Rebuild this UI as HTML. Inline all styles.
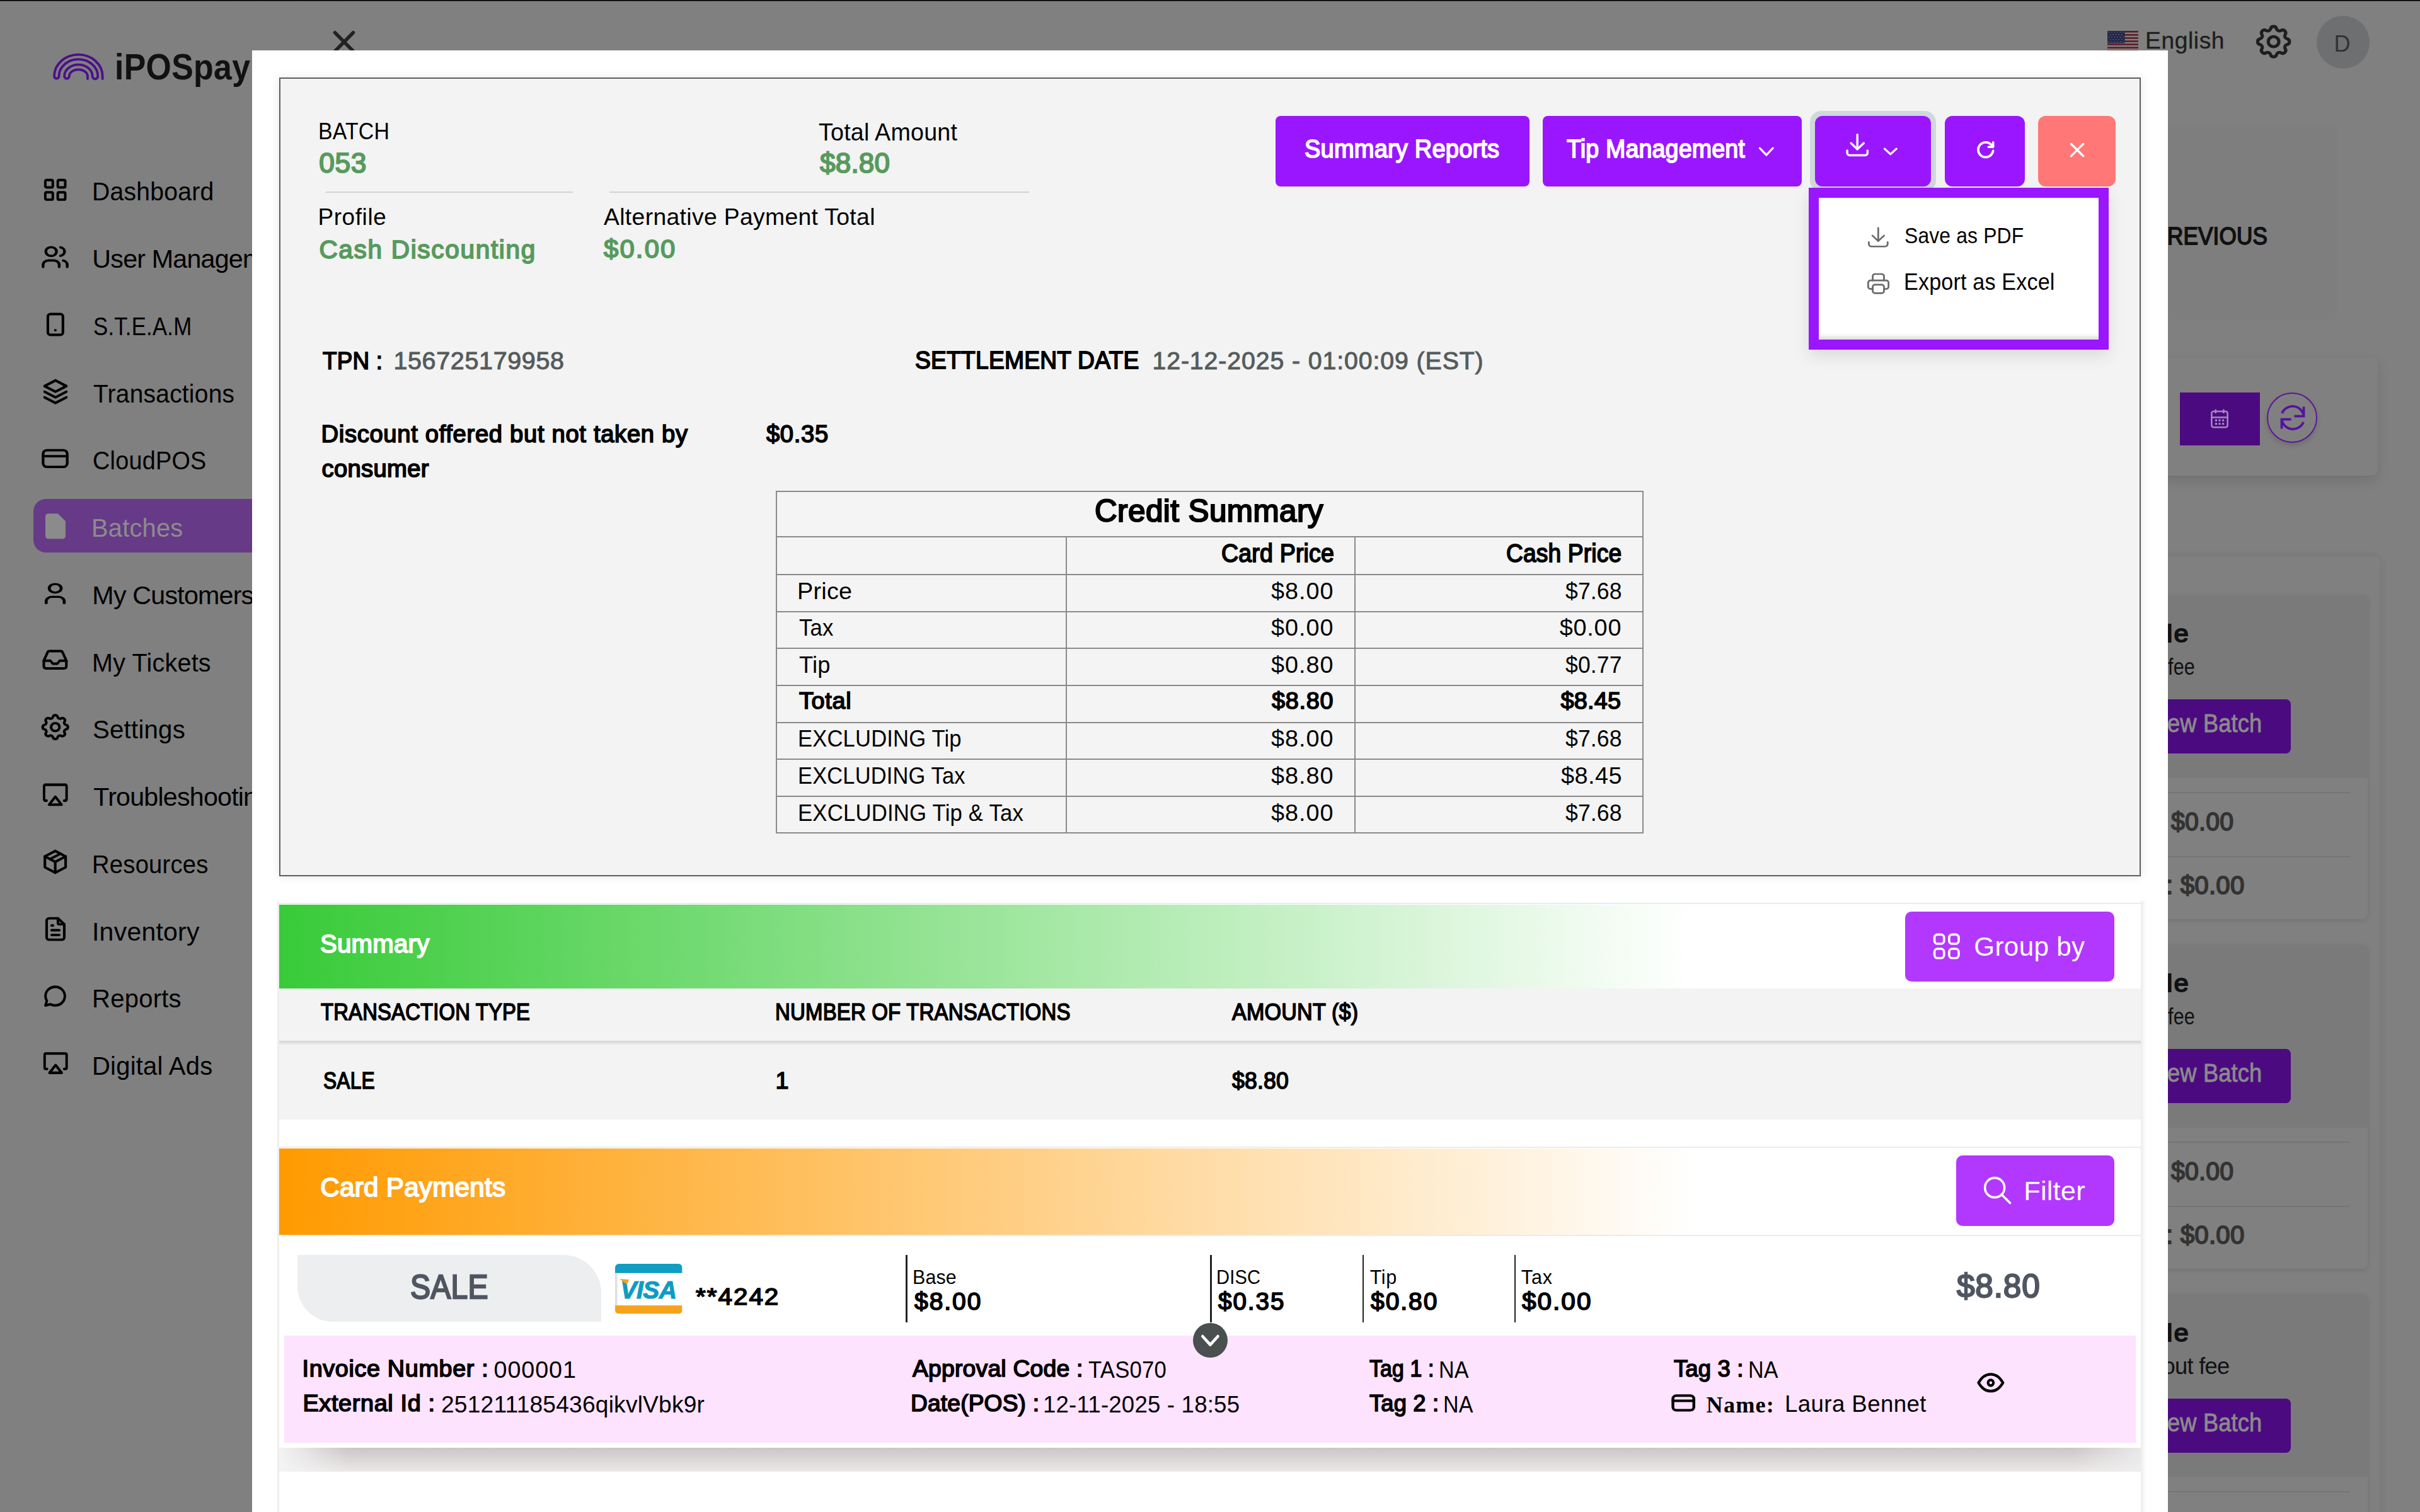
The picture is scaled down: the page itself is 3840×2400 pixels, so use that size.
<!DOCTYPE html>
<html><head><meta charset="utf-8">
<style>
html,body{margin:0;padding:0}
body{width:3840px;height:2400px;overflow:hidden;position:relative;background:#808080;font-family:"Liberation Sans",sans-serif}
@media (max-width:2500px){html{zoom:0.5}}
.t{position:absolute;line-height:1;white-space:nowrap;font-family:"Liberation Sans",sans-serif}
.ic{position:absolute;overflow:visible}
.r{position:absolute;box-sizing:border-box}
</style></head><body>
<!-- top dark line -->
<div class="r" style="left:0;top:0;width:3840px;height:2px;background:linear-gradient(#000 50%,#555)"></div>

<!-- ===== sidebar ===== -->
<svg class="ic" style="left:0;top:0" width="200" height="160"><path d="M162.7 125 L162.7 121 A38.3 34.3 0 0 0 86.1 121 A3.7 3.7 0 0 0 93.5 121 A30.9 26.9 0 0 1 155.3 121 A4.3 4.3 0 0 1 146.7 121 A22.3 18.3 0 0 0 102.1 121 A3.85 3.85 0 0 0 109.8 121 A14.6 10.6 0 0 1 139 121 L139 125" fill="none" stroke="#4b108a" stroke-width="3.8" stroke-linecap="round" stroke-linejoin="round"/></svg>
<div id="logo" class="t" style="position:absolute;left:181.67px;top:77.05px;font-size:58.28px;letter-spacing:0.291px;font-weight:700;color:#111;transform:scaleX(0.8908);transform-origin:left">iPOSpay</div>
<div class="r" style="left:53px;top:792px;width:400px;height:85px;border-radius:20px;background:#663a87"></div>
<svg class="ic" style="left:64px;top:809.7px" width="50.5" height="49" viewBox="0 0 24 24" preserveAspectRatio="none"><path d="M6 2.6h7.2l5.8 5.8v11.6a2.2 2.2 0 0 1 -2.2 2.2h-10.8a2.2 2.2 0 0 1 -2.2 -2.2v-15.2a2.2 2.2 0 0 1 2.2 -2.2z" fill="#8b8b8b"/></svg>
<svg class="ic" style="left:64.10px;top:278.12px" width="47.40" height="46.65" viewBox="0 0 24 24" preserveAspectRatio="none"><g fill="none" stroke="#000" stroke-width="2.041" stroke-linecap="round" stroke-linejoin="round" ><rect x="4" y="4" width="6" height="6" rx="1"/><rect x="14" y="4" width="6" height="6" rx="1"/><rect x="4" y="14" width="6" height="6" rx="1"/><rect x="14" y="14" width="6" height="6" rx="1"/></g></svg>
<svg class="ic" style="left:62.32px;top:386.73px" width="51.07" height="42.13" viewBox="0 0 24 24" preserveAspectRatio="none"><g fill="none" stroke="#000" stroke-width="2.060" stroke-linecap="round" stroke-linejoin="round" ><path d="M5 7a4 4 0 1 0 8 0a4 4 0 1 0 -8 0"/><path d="M3 21v-2a4 4 0 0 1 4 -4h4a4 4 0 0 1 4 4v2"/><path d="M16 3.13a4 4 0 0 1 0 7.75"/><path d="M21 21v-2a4 4 0 0 0 -3 -3.85"/></g></svg>
<svg class="ic" style="left:64.05px;top:492.50px" width="47.80" height="44.00" viewBox="0 0 24 24" preserveAspectRatio="none"><g fill="none" stroke="#000" stroke-width="2.092" stroke-linecap="round" stroke-linejoin="round" ><path d="M6 5a2 2 0 0 1 2 -2h8a2 2 0 0 1 2 2v14a2 2 0 0 1 -2 2h-8a2 2 0 0 1 -2 -2v-14z"/><path d="M12 17v.01"/></g></svg>
<svg class="ic" style="left:61.62px;top:595.08px" width="52.05" height="53.55" viewBox="0 0 24 24" preserveAspectRatio="none"><g fill="none" stroke="#000" stroke-width="1.818" stroke-linecap="round" stroke-linejoin="round" ><path d="M12 4l-8 4l8 4l8 -4l-8 -4"/><path d="M4 12l8 4l8 -4"/><path d="M4 16l8 4l8 -4"/></g></svg>
<svg class="ic" style="left:62.32px;top:705.46px" width="51.07" height="45.77" viewBox="0 0 24 24" preserveAspectRatio="none"><g fill="none" stroke="#000" stroke-width="1.983" stroke-linecap="round" stroke-linejoin="round" ><path d="M3 8a3 3 0 0 1 3 -3h12a3 3 0 0 1 3 3v8a3 3 0 0 1 -3 3h-12a3 3 0 0 1 -3 -3z"/><path d="M3 10h18"/></g></svg>
<svg class="ic" style="left:59.10px;top:921.53px" width="57.20" height="40.53" viewBox="0 0 24 24" preserveAspectRatio="none"><g fill="none" stroke="#000" stroke-width="1.965" stroke-linecap="round" stroke-linejoin="round" ><path d="M8 7a4 4 0 1 0 8 0a4 4 0 0 0 -8 0"/><path d="M6 21v-2a4 4 0 0 1 4 -4h4a4 4 0 0 1 4 4v2"/></g></svg>
<svg class="ic" style="left:63.49px;top:1025.47px" width="48.82" height="45.52" viewBox="0 0 24 24" preserveAspectRatio="none"><g fill="none" stroke="#000" stroke-width="2.035" stroke-linecap="round" stroke-linejoin="round" ><path d="M3.2 12.5 L6.2 5.4 Q6.6 4.5 7.5 4.5 H16.5 Q17.4 4.5 17.8 5.4 L20.8 12.5 V17 Q20.8 19 18.8 19 H5.2 Q3.2 19 3.2 17 Z"/><path d="M3.2 12.5 H8.3 L10.2 15 H13.8 L15.7 12.5 H20.8"/></g></svg>
<svg class="ic" style="left:61.13px;top:1129.42px" width="53.44" height="50.27" viewBox="0 0 24 24" preserveAspectRatio="none"><g fill="none" stroke="#000" stroke-width="1.851" stroke-linecap="round" stroke-linejoin="round" ><path d="M10.325 4.317c.426 -1.756 2.924 -1.756 3.35 0a1.724 1.724 0 0 0 2.573 1.066c1.543 -.94 3.31 .826 2.37 2.37a1.724 1.724 0 0 0 1.065 2.572c1.756 .426 1.756 2.924 0 3.35a1.724 1.724 0 0 0 -1.066 2.573c.94 1.543 -.826 3.31 -2.37 2.37a1.724 1.724 0 0 0 -2.572 1.065c-.426 1.756 -2.924 1.756 -3.35 0a1.724 1.724 0 0 0 -2.573 -1.066c-1.543 .94 -3.31 -.826 -2.37 -2.37a1.724 1.724 0 0 0 -1.065 -2.572c-1.756 -.426 -1.756 -2.924 0 -3.35a1.724 1.724 0 0 0 1.066 -2.573c-.94 -1.543 .826 -3.31 2.37 -2.37c1 .608 2.296 .07 2.572 -1.065z"/><path d="M9 12a3 3 0 1 0 6 0a3 3 0 0 0 -6 0"/></g></svg>
<svg class="ic" style="left:64.35px;top:1235.13px" width="47.60" height="50.72" viewBox="0 0 24 24" preserveAspectRatio="none"><g fill="none" stroke="#000" stroke-width="1.953" stroke-linecap="round" stroke-linejoin="round" ><path d="M5 17h-1a1 1 0 0 1 -1 -1v-10a1 1 0 0 1 1 -1h16a1 1 0 0 1 1 1v10a1 1 0 0 1 -1 1h-1"/><path d="M12 14l5 6h-10z"/></g></svg>
<svg class="ic" style="left:63.18px;top:1345.05px" width="49.35" height="46.00" viewBox="0 0 24 24" preserveAspectRatio="none"><g fill="none" stroke="#000" stroke-width="2.014" stroke-linecap="round" stroke-linejoin="round" ><path d="M12 3l8 4.5l0 9l-8 4.5l-8 -4.5l0 -9l8 -4.5"/><path d="M12 12l8 -4.5"/><path d="M12 12l0 9"/><path d="M12 12l-8 -4.5"/><path d="M16 5.25l-8 4.5"/></g></svg>
<svg class="ic" style="left:63.90px;top:1452.03px" width="48.00" height="45.33" viewBox="0 0 24 24" preserveAspectRatio="none"><g fill="none" stroke="#000" stroke-width="2.057" stroke-linecap="round" stroke-linejoin="round" ><path d="M14 3v4a1 1 0 0 0 1 1h4"/><path d="M17 21h-10a2 2 0 0 1 -2 -2v-14a2 2 0 0 1 2 -2h7l5 5v11a2 2 0 0 1 -2 2z"/><path d="M9 9h1"/><path d="M9 13h6"/><path d="M9 17h6"/></g></svg>
<svg class="ic" style="left:67.47px;top:1559.35px" width="41.01" height="44.34" viewBox="0 0 24 24" preserveAspectRatio="none"><g fill="none" stroke="#000" stroke-width="2.249" stroke-linecap="round" stroke-linejoin="round" ><path d="M3 20l1.3 -3.9c-2.324 -3.437 -1.426 -7.872 2.1 -10.374c3.526 -2.501 8.59 -2.296 11.845 .48c3.255 2.777 3.695 7.266 1.029 10.501c-2.666 3.235 -7.615 4.215 -11.574 2.293l-4.7 1"/></g></svg>
<svg class="ic" style="left:64.88px;top:1662.27px" width="46.53" height="49.12" viewBox="0 0 24 24" preserveAspectRatio="none"><g fill="none" stroke="#000" stroke-width="2.007" stroke-linecap="round" stroke-linejoin="round" ><path d="M5 17h-1a1 1 0 0 1 -1 -1v-10a1 1 0 0 1 1 -1h16a1 1 0 0 1 1 1v10a1 1 0 0 1 -1 1h-1"/><path d="M12 14l5 6h-10z"/></g></svg>
<div id="m0" class="t" style="position:absolute;left:146.35px;top:284.45px;font-size:41.28px;letter-spacing:0.206px;font-weight:400;color:#000;transform:scaleX(0.9502);transform-origin:left">Dashboard</div>
<div id="m1" class="t" style="position:absolute;left:146.35px;top:391.19px;font-size:41.28px;letter-spacing:-0.826px;font-weight:400;color:#000">User Management</div>
<div id="m2" class="t" style="position:absolute;left:148.35px;top:497.93px;font-size:41.28px;letter-spacing:0.206px;font-weight:400;color:#000;transform:scaleX(0.8437);transform-origin:left">S.T.E.A.M</div>
<div id="m3" class="t" style="position:absolute;left:148.35px;top:604.67px;font-size:41.28px;letter-spacing:0.206px;font-weight:400;color:#000;transform:scaleX(0.9454);transform-origin:left">Transactions</div>
<div id="m4" class="t" style="position:absolute;left:147.35px;top:711.41px;font-size:41.28px;letter-spacing:0.206px;font-weight:400;color:#000;transform:scaleX(0.9181);transform-origin:left">CloudPOS</div>
<div id="m5" class="t" style="position:absolute;left:145.35px;top:818.15px;font-size:41.28px;letter-spacing:0.206px;font-weight:400;color:#8c8c8c;transform:scaleX(0.9665);transform-origin:left">Batches</div>
<div id="m6" class="t" style="position:absolute;left:146.35px;top:924.89px;font-size:41.28px;letter-spacing:-0.826px;font-weight:400;color:#000">My Customers</div>
<div id="m7" class="t" style="position:absolute;left:146.35px;top:1031.63px;font-size:41.28px;letter-spacing:0.206px;font-weight:400;color:#000;transform:scaleX(0.9588);transform-origin:left">My Tickets</div>
<div id="m8" class="t" style="position:absolute;left:147.35px;top:1138.37px;font-size:41.28px;letter-spacing:0.206px;font-weight:400;color:#000;transform:scaleX(0.9752);transform-origin:left">Settings</div>
<div id="m9" class="t" style="position:absolute;left:148.35px;top:1245.11px;font-size:41.28px;letter-spacing:-0.826px;font-weight:400;color:#000">Troubleshooting</div>
<div id="m10" class="t" style="position:absolute;left:146.35px;top:1351.85px;font-size:41.28px;letter-spacing:0.206px;font-weight:400;color:#000;transform:scaleX(0.9276);transform-origin:left">Resources</div>
<div id="m11" class="t" style="position:absolute;left:146.35px;top:1458.59px;font-size:41.28px;letter-spacing:0.206px;font-weight:400;color:#000;transform:scaleX(0.9948);transform-origin:left">Inventory</div>
<div id="m12" class="t" style="position:absolute;left:146.35px;top:1565.33px;font-size:41.28px;letter-spacing:0.206px;font-weight:400;color:#000;transform:scaleX(0.9716);transform-origin:left">Reports</div>
<div id="m13" class="t" style="position:absolute;left:146.35px;top:1672.07px;font-size:41.28px;letter-spacing:0.206px;font-weight:400;color:#000;transform:scaleX(0.9702);transform-origin:left">Digital Ads</div>

<!-- ===== header right ===== -->
<svg class="ic" style="left:3344px;top:49px" width="49" height="33" viewBox="0 0 49 33">
<rect width="49" height="33" fill="#808080"/>
<g fill="#5a1a24"><rect y="0" width="49" height="2.54"/><rect y="5.08" width="49" height="2.54"/><rect y="10.15" width="49" height="2.54"/><rect y="15.23" width="49" height="2.54"/><rect y="20.3" width="49" height="2.54"/><rect y="25.4" width="49" height="2.54"/><rect y="30.46" width="49" height="2.54"/></g>
<rect width="27.6" height="19.6" fill="#25284a"/><g fill="#6a6c80"><circle cx="2.3" cy="2.0" r="0.8"/><circle cx="6.9" cy="2.0" r="0.8"/><circle cx="11.5" cy="2.0" r="0.8"/><circle cx="16.1" cy="2.0" r="0.8"/><circle cx="20.7" cy="2.0" r="0.8"/><circle cx="25.3" cy="2.0" r="0.8"/><circle cx="4.6" cy="5.9" r="0.8"/><circle cx="9.2" cy="5.9" r="0.8"/><circle cx="13.8" cy="5.9" r="0.8"/><circle cx="18.4" cy="5.9" r="0.8"/><circle cx="23.0" cy="5.9" r="0.8"/><circle cx="2.3" cy="9.8" r="0.8"/><circle cx="6.9" cy="9.8" r="0.8"/><circle cx="11.5" cy="9.8" r="0.8"/><circle cx="16.1" cy="9.8" r="0.8"/><circle cx="20.7" cy="9.8" r="0.8"/><circle cx="25.3" cy="9.8" r="0.8"/><circle cx="4.6" cy="13.7" r="0.8"/><circle cx="9.2" cy="13.7" r="0.8"/><circle cx="13.8" cy="13.7" r="0.8"/><circle cx="18.4" cy="13.7" r="0.8"/><circle cx="23.0" cy="13.7" r="0.8"/><circle cx="2.3" cy="17.6" r="0.8"/><circle cx="6.9" cy="17.6" r="0.8"/><circle cx="11.5" cy="17.6" r="0.8"/><circle cx="16.1" cy="17.6" r="0.8"/><circle cx="20.7" cy="17.6" r="0.8"/><circle cx="25.3" cy="17.6" r="0.8"/></g></svg>
<div id="eng" class="t" style="position:absolute;left:3404.01px;top:45.81px;font-size:37.21px;letter-spacing:0.590px;font-weight:400;color:#1e1e1e;-webkit-text-stroke:0.35px #1e1e1e">English</div>
<svg class="ic" style="left:3574.37px;top:34.47px" width="67.26" height="64.27" viewBox="0 0 24 24" preserveAspectRatio="none"><g fill="none" stroke="#1e1e1e" stroke-width="1.825" stroke-linecap="round" stroke-linejoin="round" ><path d="M10.325 4.317c.426 -1.756 2.924 -1.756 3.35 0a1.724 1.724 0 0 0 2.573 1.066c1.543 -.94 3.31 .826 2.37 2.37a1.724 1.724 0 0 0 1.065 2.572c1.756 .426 1.756 2.924 0 3.35a1.724 1.724 0 0 0 -1.066 2.573c.94 1.543 -.826 3.31 -2.37 2.37a1.724 1.724 0 0 0 -2.572 1.065c-.426 1.756 -2.924 1.756 -3.35 0a1.724 1.724 0 0 0 -2.573 -1.066c-1.543 .94 -3.31 -.826 -2.37 -2.37a1.724 1.724 0 0 0 -1.065 -2.572c-1.756 -.426 -1.756 -2.924 0 -3.35a1.724 1.724 0 0 0 1.066 -2.573c-.94 -1.543 .826 -3.31 2.37 -2.37c1 .608 2.296 .07 2.572 -1.065z"/><path d="M9 12a3 3 0 1 0 6 0a3 3 0 0 0 -6 0"/></g></svg>
<div class="r" style="left:3675.5px;top:24.8px;width:84.6px;height:84.6px;border-radius:50%;background:#6e6f70"></div>
<div id="avD" class="t" style="position:absolute;left:3703.56px;top:51.88px;font-size:36.05px;letter-spacing:-0.721px;font-weight:400;color:#333">D</div>

<!-- close X above modal -->
<svg class="ic" style="left:517.25px;top:37.00px" width="58.00" height="59.00" viewBox="0 0 24 24" preserveAspectRatio="none"><g fill="none" stroke="#222" stroke-width="2.256" stroke-linecap="round" stroke-linejoin="round" ><path d="M18 6l-12 12"/><path d="M6 6l12 12"/></g></svg>

<!-- ===== background page right ===== -->
<div class="r" style="left:3300px;top:197px;width:408px;height:310px;background:#7e7e7e;border-radius:8px"></div>
<div id="prev" class="t" style="position:absolute;left:3439.43px;top:354.96px;font-size:39.24px;letter-spacing:0.196px;font-weight:400;color:#111;-webkit-text-stroke:1.77px #111;transform:scaleX(0.8932);transform-origin:left">REVIOUS</div>
<div class="r" style="left:3300px;top:569px;width:473px;height:186px;background:#808080;border-radius:10px;box-shadow:0 8px 20px rgba(0,0,0,0.12)"></div>
<div class="r" style="left:3458.6px;top:623px;width:127.4px;height:84px;background:#4c0a80"></div>
<svg class="ic" style="left:3503px;top:645px" width="38" height="38" viewBox="0 0 24 24"><g fill="none" stroke="#a18bbd" stroke-width="1.6"><rect x="4" y="5" width="16" height="16" rx="2"/><path d="M16 3v4M8 3v4M4 11h16"/></g><g fill="#a18bbd"><rect x="7.5" y="13" width="2" height="2"/><rect x="11" y="13" width="2" height="2"/><rect x="14.5" y="13" width="2" height="2"/><rect x="7.5" y="16.5" width="2" height="2"/><rect x="11" y="16.5" width="2" height="2"/><rect x="14.5" y="16.5" width="2" height="2"/></g></svg>
<div class="r" style="left:3597px;top:623px;width:80px;height:80px;border-radius:50%;border:2px solid #5a1799;box-shadow:0 4px 8px rgba(0,0,0,0.15)"></div>
<svg class="ic" style="left:3607.5px;top:633px" width="60" height="60" viewBox="0 0 24 24"><g fill="none" stroke="#5512a0" stroke-width="1.5" stroke-linecap="butt" stroke-linejoin="miter"><path d="M19 11a7.2 7.2 0 0 0 -13.8 -1.8"/><path d="M19 5v6h-6"/><path d="M5 13a7.2 7.2 0 0 0 13.8 1.8"/><path d="M5 19v-6h6"/></g></svg>
<div class="r" style="left:3300px;top:883.3px;width:476.5px;height:1600px;background:#808080;border-radius:10px;box-shadow:0 0 12px rgba(0,0,0,0.10)"></div>
<div class="r" style="left:3300px;top:944.7px;width:456.6px;height:514.3px;background:#808080;border-radius:8px;box-shadow:0 2px 8px rgba(0,0,0,0.12)"></div><div class="r" style="left:3300px;top:944.7px;width:456.6px;height:290px;background:#7a7a7a;border-radius:8px 8px 0 0"></div><div class="r" style="left:3300px;top:1109.7px;width:334.7px;height:86.8px;background:#4c0a80;border-radius:8px"></div><div class="r" style="left:3300px;top:1257.0px;width:427.8px;height:2px;background:#747474"></div><div class="r" style="left:3300px;top:1358.5px;width:427.8px;height:2px;background:#747474"></div><div class="r" style="left:3300px;top:1499.7px;width:456.6px;height:514.3px;background:#808080;border-radius:8px;box-shadow:0 2px 8px rgba(0,0,0,0.12)"></div><div class="r" style="left:3300px;top:1499.7px;width:456.6px;height:290px;background:#7a7a7a;border-radius:8px 8px 0 0"></div><div class="r" style="left:3300px;top:1664.7px;width:334.7px;height:86.8px;background:#4c0a80;border-radius:8px"></div><div class="r" style="left:3300px;top:1812.0px;width:427.8px;height:2px;background:#747474"></div><div class="r" style="left:3300px;top:1913.5px;width:427.8px;height:2px;background:#747474"></div><div class="r" style="left:3300px;top:2054.7px;width:456.6px;height:514.3px;background:#808080;border-radius:8px;box-shadow:0 2px 8px rgba(0,0,0,0.12)"></div><div class="r" style="left:3300px;top:2054.7px;width:456.6px;height:290px;background:#7a7a7a;border-radius:8px 8px 0 0"></div><div class="r" style="left:3300px;top:2219.7px;width:334.7px;height:86.8px;background:#4c0a80;border-radius:8px"></div><div class="r" style="left:3300px;top:2367.0px;width:427.8px;height:2px;background:#747474"></div><div class="r" style="left:3300px;top:2468.5px;width:427.8px;height:2px;background:#747474"></div>
<div id="le0" class="t" style="position:absolute;left:3438.43px;top:985.96px;font-size:39.24px;letter-spacing:1.962px;font-weight:400;color:#111;-webkit-text-stroke:1.77px #111;transform:scaleX(1.0656);transform-origin:left">le</div>
<div id="le1" class="t" style="position:absolute;left:3438.43px;top:1540.96px;font-size:39.24px;letter-spacing:1.962px;font-weight:400;color:#111;-webkit-text-stroke:1.77px #111;transform:scaleX(1.0656);transform-origin:left">le</div>
<div id="le2" class="t" style="position:absolute;left:3438.43px;top:2095.96px;font-size:39.24px;letter-spacing:1.962px;font-weight:400;color:#111;-webkit-text-stroke:1.77px #111;transform:scaleX(1.0656);transform-origin:left">le</div>
<div id="fee0" class="t" style="position:absolute;left:3439.55px;top:1040.83px;font-size:36.34px;letter-spacing:0.182px;font-weight:400;color:#111;transform:scaleX(0.8402);transform-origin:left">fee</div>
<div id="fee1" class="t" style="position:absolute;left:3439.55px;top:1595.83px;font-size:36.34px;letter-spacing:0.182px;font-weight:400;color:#111;transform:scaleX(0.8402);transform-origin:left">fee</div>
<div id="fee2" class="t" style="position:absolute;right:302.55px;top:2150.83px;font-size:36.34px;letter-spacing:-0.727px;font-weight:400;color:#111">without fee</div>
<div id="ewb0" class="t" style="position:absolute;left:3439.37px;top:1128.42px;font-size:40.70px;letter-spacing:0.203px;font-weight:400;color:#8a8a8a;-webkit-text-stroke:0.90px #8a8a8a;transform:scaleX(0.8903);transform-origin:left">ew Batch</div>
<div id="ewb1" class="t" style="position:absolute;left:3439.37px;top:1683.42px;font-size:40.70px;letter-spacing:0.203px;font-weight:400;color:#8a8a8a;-webkit-text-stroke:0.90px #8a8a8a;transform:scaleX(0.8903);transform-origin:left">ew Batch</div>
<div id="ewb2" class="t" style="position:absolute;left:3439.37px;top:2238.42px;font-size:40.70px;letter-spacing:0.203px;font-weight:400;color:#8a8a8a;-webkit-text-stroke:0.90px #8a8a8a;transform:scaleX(0.8903);transform-origin:left">ew Batch</div>
<div id="z1_0" class="t" style="position:absolute;left:3445.37px;top:1283.68px;font-size:40.70px;letter-spacing:0.203px;font-weight:400;color:#333;-webkit-text-stroke:1.83px #333;transform:scaleX(0.9662);transform-origin:left">$0.00</div>
<div id="z1_1" class="t" style="position:absolute;left:3445.37px;top:1838.68px;font-size:40.70px;letter-spacing:0.203px;font-weight:400;color:#333;-webkit-text-stroke:1.83px #333;transform:scaleX(0.9662);transform-origin:left">$0.00</div>
<div id="z2_0" class="t" style="position:absolute;left:3437.34px;top:1385.03px;font-size:41.42px;letter-spacing:0.207px;font-weight:400;color:#333;-webkit-text-stroke:1.86px #333;transform:scaleX(0.9723);transform-origin:left">: $0.00</div>
<div id="z2_1" class="t" style="position:absolute;left:3437.34px;top:1940.03px;font-size:41.42px;letter-spacing:0.207px;font-weight:400;color:#333;-webkit-text-stroke:1.86px #333;transform:scaleX(0.9723);transform-origin:left">: $0.00</div>

<!-- ===== MODAL ===== -->
<div class="r" style="left:400px;top:80px;width:3040px;height:2320px;background:#fff"></div>
<!-- inner box -->
<div class="r" style="left:443px;top:123px;width:2954px;height:1268px;background:#f3f3f3;border:2px solid #5e5e5e;box-shadow:0 0 14px rgba(0,0,0,0.10)"></div>
<div class="r" style="left:517px;top:304px;width:392px;height:2px;background:#d2d2d2"></div>
<div class="r" style="left:967px;top:304px;width:666px;height:2px;background:#d2d2d2"></div>
<div id="batch" class="t" style="position:absolute;left:504.50px;top:190.15px;font-size:37.50px;letter-spacing:0.188px;font-weight:400;color:#000;transform:scaleX(0.9026);transform-origin:left">BATCH</div>
<div id="b053" class="t" style="position:absolute;left:506.23px;top:237.47px;font-size:44.33px;letter-spacing:0.613px;font-weight:400;color:#579a5d;-webkit-text-stroke:1.99px #579a5d">053</div>
<div id="totA" class="t" style="position:absolute;left:1298.93px;top:189.57px;font-size:39.24px;letter-spacing:0.196px;font-weight:400;color:#000;transform:scaleX(0.9603);transform-origin:left">Total Amount</div>
<div id="tot880" class="t" style="position:absolute;left:1300.73px;top:237.27px;font-size:44.33px;letter-spacing:0.222px;font-weight:400;color:#579a5d;-webkit-text-stroke:1.99px #579a5d;transform:scaleX(0.9927);transform-origin:left">$8.80</div>
<div id="prof" class="t" style="position:absolute;left:504.52px;top:326.64px;font-size:36.92px;letter-spacing:0.595px;font-weight:400;color:#000">Profile</div>
<div id="cashd" class="t" style="position:absolute;left:506.38px;top:376.20px;font-size:40.55px;letter-spacing:1.677px;font-weight:400;color:#579a5d;-webkit-text-stroke:1.82px #579a5d">Cash Discounting</div>
<div id="alt" class="t" style="position:absolute;left:958.01px;top:325.97px;font-size:37.35px;letter-spacing:0.328px;font-weight:400;color:#000">Alternative Payment Total</div>
<div id="alt0" class="t" style="position:absolute;left:957.85px;top:375.49px;font-size:41.13px;letter-spacing:2.057px;font-weight:400;color:#579a5d;-webkit-text-stroke:1.85px #579a5d;transform:scaleX(1.0203);transform-origin:left">$0.00</div>
<div id="tpn" class="t" style="position:absolute;left:512.47px;top:553.56px;font-size:38.23px;letter-spacing:0.191px;font-weight:400;color:#000;-webkit-text-stroke:1.72px #000;transform:scaleX(0.9649);transform-origin:left">TPN :</div>
<div id="tpnv" class="t" style="position:absolute;left:624.42px;top:553.03px;font-size:39.53px;letter-spacing:0.626px;font-weight:400;color:#555b5c;-webkit-text-stroke:1.00px #555b5c">156725179958</div>
<div id="sett" class="t" style="position:absolute;left:1452.43px;top:552.46px;font-size:39.24px;letter-spacing:0.196px;font-weight:400;color:#000;-webkit-text-stroke:1.77px #000;transform:scaleX(0.9497);transform-origin:left">SETTLEMENT DATE</div>
<div id="settv" class="t" style="position:absolute;left:1828.43px;top:553.07px;font-size:39.24px;letter-spacing:0.908px;font-weight:400;color:#555b5c;-webkit-text-stroke:1.00px #555b5c">12-12-2025 - 01:00:09 (EST)</div>
<div id="disc1" class="t" style="position:absolute;left:509.47px;top:670.16px;font-size:38.23px;letter-spacing:0.668px;font-weight:400;color:#000;-webkit-text-stroke:1.72px #000">Discount offered but not taken by</div>
<div id="disc2" class="t" style="position:absolute;left:510.47px;top:724.66px;font-size:38.23px;letter-spacing:0.312px;font-weight:400;color:#000;-webkit-text-stroke:1.72px #000">consumer</div>
<div id="disc3" class="t" style="position:absolute;left:1215.97px;top:669.86px;font-size:38.23px;letter-spacing:0.635px;font-weight:400;color:#000;-webkit-text-stroke:1.72px #000">$0.35</div>

<!-- buttons -->
<div class="r" style="left:2024px;top:184px;width:403px;height:112px;border-radius:8px;background:#9a16ff"></div>
<div class="r" style="left:2448px;top:184px;width:410.5px;height:112px;border-radius:8px;background:#9a16ff"></div>
<div id="btnSR" class="t" style="position:absolute;left:2070.37px;top:215.68px;font-size:40.70px;letter-spacing:0.203px;font-weight:400;color:#fff;-webkit-text-stroke:1.83px #fff;transform:scaleX(0.9348);transform-origin:left">Summary Reports</div>
<div id="btnTM" class="t" style="position:absolute;left:2485.87px;top:215.68px;font-size:40.70px;letter-spacing:0.203px;font-weight:400;color:#fff;-webkit-text-stroke:1.83px #fff;transform:scaleX(0.9226);transform-origin:left">Tip Management</div>
<svg class="ic" style="left:2782.20px;top:219.40px" width="41.60" height="43.20" viewBox="0 0 24 24" preserveAspectRatio="none"><g fill="none" stroke="#fff" stroke-width="1.811" stroke-linecap="round" stroke-linejoin="round" ><path d="M6 9l6 6l6 -6"/></g></svg>
<div class="r" style="left:2872px;top:176px;width:200px;height:128px;border-radius:18px;background:#cfd8dc"></div>
<div class="r" style="left:2880px;top:184px;width:184px;height:112px;border-radius:12px;background:#9a16ff"></div>
<svg class="ic" style="left:2922.93px;top:205.78px" width="48.45" height="46.31" viewBox="0 0 24 24" preserveAspectRatio="none"><g fill="none" stroke="#fff" stroke-width="1.722" stroke-linecap="round" stroke-linejoin="round" ><path d="M4 17v2a2 2 0 0 0 2 2h12a2 2 0 0 0 2 -2v-2"/><path d="M7 11l5 5l5 -5"/><path d="M12 4v12"/></g></svg>
<svg class="ic" style="left:2981.00px;top:222.95px" width="37.60" height="34.80" viewBox="0 0 24 24" preserveAspectRatio="none"><g fill="none" stroke="#fff" stroke-width="2.122" stroke-linecap="round" stroke-linejoin="round" ><path d="M6 9l6 6l6 -6"/></g></svg>
<div class="r" style="left:3085.5px;top:184px;width:127.5px;height:112px;border-radius:12px;background:#9a16ff"></div>
<svg class="ic" style="left:3132.51px;top:220.40px" width="35.63" height="35.41" viewBox="0 0 24 24" preserveAspectRatio="none"><g fill="none" stroke="#fff" stroke-width="2.433" stroke-linecap="round" stroke-linejoin="round" ><path d="M19.933 13.041a8 8 0 1 1 -9.925 -8.788c3.899 -1 7.935 1.007 9.425 4.747"/><path d="M20 4v5h-5"/></g></svg>
<div class="r" style="left:3234px;top:184px;width:123px;height:112px;border-radius:12px;background:#ff7777"></div>
<svg class="ic" style="left:3277.15px;top:219.15px" width="38.20" height="38.20" viewBox="0 0 24 24" preserveAspectRatio="none"><g fill="none" stroke="#fff" stroke-width="2.136" stroke-linecap="round" stroke-linejoin="round" ><path d="M18 6l-12 12"/><path d="M6 6l12 12"/></g></svg>

<!-- dropdown -->
<div class="r" style="left:2870px;top:298px;width:476px;height:256.5px;background:#9a16ff;box-shadow:0 10px 24px rgba(0,0,0,0.10)"></div>
<div class="r" style="left:2886px;top:314px;width:444px;height:225px;background:#fff;box-shadow:inset 0 -9px 6px -4px rgba(0,0,0,0.13)"></div>
<svg class="ic" style="left:2958.40px;top:355.46px" width="44.70" height="41.36" viewBox="0 0 24 24" preserveAspectRatio="none"><g fill="none" stroke="#6a6a6a" stroke-width="1.506" stroke-linecap="round" stroke-linejoin="round" ><path d="M4 17v2a2 2 0 0 0 2 2h12a2 2 0 0 0 2 -2v-2"/><path d="M7 11l5 5l5 -5"/><path d="M12 4v12"/></g></svg>
<svg class="ic" style="left:2958.97px;top:430.30px" width="43.07" height="40.40" viewBox="0 0 24 24" preserveAspectRatio="none"><g fill="none" stroke="#6a6a6a" stroke-width="1.553" stroke-linecap="round" stroke-linejoin="round" stroke-linejoin="miter"><path d="M17 17h2a2 2 0 0 0 2 -2v-4a2 2 0 0 0 -2 -2h-14a2 2 0 0 0 -2 2v4a2 2 0 0 0 2 2h2"/><path d="M17 9v-4a2 2 0 0 0 -2 -2h-6a2 2 0 0 0 -2 2v4"/><path d="M7 15a2 2 0 0 1 2 -2h6a2 2 0 0 1 2 2v4a2 2 0 0 1 -2 2h-6a2 2 0 0 1 -2 -2z"/></g></svg>
<div id="pdf" class="t" style="position:absolute;left:3022.12px;top:357.13px;font-size:34.45px;letter-spacing:0.172px;font-weight:400;color:#000;transform:scaleX(0.9248);transform-origin:left">Save as PDF</div>
<div id="xls" class="t" style="position:absolute;left:3021.05px;top:430.13px;font-size:36.34px;letter-spacing:0.182px;font-weight:400;color:#000;transform:scaleX(0.9390);transform-origin:left">Export as Excel</div>

<!-- credit summary table -->
<div class="r" style="left:1231px;top:778.6px;width:1377px;height:544.4px;border:2px solid #8a8a8a;background:#f4f4f4"></div>
<div class="r" style="left:1231px;top:851.0px;width:1377px;height:2px;background:#8a8a8a"></div><div class="r" style="left:1231px;top:911.3px;width:1377px;height:2px;background:#8a8a8a"></div><div class="r" style="left:1231px;top:970.0px;width:1377px;height:2px;background:#8a8a8a"></div><div class="r" style="left:1231px;top:1028.0px;width:1377px;height:2px;background:#8a8a8a"></div><div class="r" style="left:1231px;top:1087.0px;width:1377px;height:2px;background:#8a8a8a"></div><div class="r" style="left:1231px;top:1146.0px;width:1377px;height:2px;background:#8a8a8a"></div><div class="r" style="left:1231px;top:1203.8px;width:1377px;height:2px;background:#8a8a8a"></div><div class="r" style="left:1231px;top:1262.5px;width:1377px;height:2px;background:#8a8a8a"></div>
<div class="r" style="left:1691px;top:852px;width:2px;height:471px;background:#8a8a8a"></div>
<div class="r" style="left:2149px;top:852px;width:2px;height:471px;background:#8a8a8a"></div>
<div id="cstitle" class="t" style="position:absolute;left:1737.02px;top:785.98px;font-size:49.42px;letter-spacing:0.429px;font-weight:400;color:#000;-webkit-text-stroke:2.22px #000">Credit Summary</div>
<div id="cpr" class="t" style="position:absolute;left:1938.40px;top:858.79px;font-size:40.12px;letter-spacing:0.201px;font-weight:400;color:#000;-webkit-text-stroke:1.81px #000;transform:scaleX(0.9353);transform-origin:left">Card Price</div>
<div id="cashpr" class="t" style="position:absolute;left:2390.40px;top:858.79px;font-size:40.12px;letter-spacing:0.201px;font-weight:400;color:#000;-webkit-text-stroke:1.81px #000;transform:scaleX(0.9247);transform-origin:left">Cash Price</div>
<div id="r0l" class="t" style="position:absolute;left:1264.99px;top:919.60px;font-size:37.79px;letter-spacing:0.244px;font-weight:400;color:#000">Price</div>
<div id="r0a" class="t" style="position:absolute;left:2017.09px;top:919.60px;font-size:37.79px;letter-spacing:0.994px;font-weight:400;color:#000">$8.00</div>
<div id="r0b" class="t" style="position:absolute;left:2483.99px;top:919.60px;font-size:37.79px;letter-spacing:0.189px;font-weight:400;color:#000;transform:scaleX(0.9387);transform-origin:left">$7.68</div>
<div id="r1l" class="t" style="position:absolute;left:1267.99px;top:978.30px;font-size:37.79px;letter-spacing:0.189px;font-weight:400;color:#000;transform:scaleX(0.9181);transform-origin:left">Tax</div>
<div id="r1a" class="t" style="position:absolute;left:2017.09px;top:978.30px;font-size:37.79px;letter-spacing:0.994px;font-weight:400;color:#000">$0.00</div>
<div id="r1b" class="t" style="position:absolute;left:2474.69px;top:978.30px;font-size:37.79px;letter-spacing:0.794px;font-weight:400;color:#000">$0.00</div>
<div id="r2l" class="t" style="position:absolute;left:1267.99px;top:1037.00px;font-size:37.79px;letter-spacing:0.189px;font-weight:400;color:#000;transform:scaleX(0.9628);transform-origin:left">Tip</div>
<div id="r2a" class="t" style="position:absolute;left:2017.09px;top:1037.00px;font-size:37.79px;letter-spacing:0.994px;font-weight:400;color:#000">$0.80</div>
<div id="r2b" class="t" style="position:absolute;left:2483.99px;top:1037.00px;font-size:37.79px;letter-spacing:0.189px;font-weight:400;color:#000;transform:scaleX(0.9387);transform-origin:left">$0.77</div>
<div id="r3l" class="t" style="position:absolute;left:1267.99px;top:1094.34px;font-size:37.79px;letter-spacing:0.744px;font-weight:400;color:#000;-webkit-text-stroke:1.70px #000">Total</div>
<div id="r3a" class="t" style="position:absolute;left:2018.09px;top:1094.34px;font-size:37.79px;letter-spacing:0.744px;font-weight:400;color:#000;-webkit-text-stroke:1.70px #000">$8.80</div>
<div id="r3b" class="t" style="position:absolute;left:2476.49px;top:1094.34px;font-size:37.79px;letter-spacing:0.244px;font-weight:400;color:#000;-webkit-text-stroke:1.70px #000">$8.45</div>
<div id="r4l" class="t" style="position:absolute;left:1265.99px;top:1154.40px;font-size:37.79px;letter-spacing:0.189px;font-weight:400;color:#000;transform:scaleX(0.9150);transform-origin:left">EXCLUDING Tip</div>
<div id="r4a" class="t" style="position:absolute;left:2017.09px;top:1154.40px;font-size:37.79px;letter-spacing:0.994px;font-weight:400;color:#000">$8.00</div>
<div id="r4b" class="t" style="position:absolute;left:2483.99px;top:1154.40px;font-size:37.79px;letter-spacing:0.189px;font-weight:400;color:#000;transform:scaleX(0.9387);transform-origin:left">$7.68</div>
<div id="r5l" class="t" style="position:absolute;left:1265.99px;top:1213.10px;font-size:37.79px;letter-spacing:0.189px;font-weight:400;color:#000;transform:scaleX(0.9114);transform-origin:left">EXCLUDING Tax</div>
<div id="r5a" class="t" style="position:absolute;left:2017.09px;top:1213.10px;font-size:37.79px;letter-spacing:0.994px;font-weight:400;color:#000">$8.80</div>
<div id="r5b" class="t" style="position:absolute;left:2476.99px;top:1213.10px;font-size:37.79px;letter-spacing:0.494px;font-weight:400;color:#000">$8.45</div>
<div id="r6l" class="t" style="position:absolute;left:1265.99px;top:1271.80px;font-size:37.79px;letter-spacing:0.189px;font-weight:400;color:#000;transform:scaleX(0.9198);transform-origin:left">EXCLUDING Tip &amp; Tax</div>
<div id="r6a" class="t" style="position:absolute;left:2017.09px;top:1271.80px;font-size:37.79px;letter-spacing:0.994px;font-weight:400;color:#000">$8.00</div>
<div id="r6b" class="t" style="position:absolute;left:2483.99px;top:1271.80px;font-size:37.79px;letter-spacing:0.189px;font-weight:400;color:#000;transform:scaleX(0.9387);transform-origin:left">$7.68</div>

<!-- summary section -->
<div class="r" style="left:443px;top:1433px;width:2954px;height:2px;background:#e9ecef"></div>
<div class="r" style="left:443px;top:1436px;width:2954px;height:133px;background:linear-gradient(90deg,#38cb38 0%,#ffffff 76%)"></div>
<div id="sumH" class="t" style="position:absolute;left:508.34px;top:1477.53px;font-size:41.42px;letter-spacing:0.207px;font-weight:400;color:#fff;-webkit-text-stroke:1.86px #fff;transform:scaleX(0.9711);transform-origin:left">Summary</div>
<div class="r" style="left:3023px;top:1447px;width:332px;height:111px;border-radius:10px;background:#b237ff"></div>
<svg class="ic" style="left:3060.20px;top:1474.45px" width="57.60" height="56.10" viewBox="0 0 24 24" preserveAspectRatio="none"><g fill="none" stroke="#fff" stroke-width="1.520" stroke-linecap="round" stroke-linejoin="round" ><rect x="4" y="4" width="6.3" height="6.3" rx="2"/><rect x="13.7" y="4" width="6.3" height="6.3" rx="2"/><rect x="4" y="13.7" width="6.3" height="6.3" rx="2"/><rect x="13.7" y="13.7" width="6.3" height="6.3" rx="2"/></g></svg>
<div id="grp" class="t" style="position:absolute;left:3132.31px;top:1482.41px;font-size:42.15px;letter-spacing:0.366px;font-weight:400;color:#fff">Group by</div>
<div class="r" style="left:443px;top:1569px;width:2954px;height:83px;background:#f3f3f3"></div>
<div class="r" style="left:443px;top:1652px;width:2954px;height:6px;background:linear-gradient(#d3d4d8,#ebebeb)"></div>
<div class="r" style="left:443px;top:1658px;width:2954px;height:119px;background:#f3f3f3"></div>
<div id="th1" class="t" style="position:absolute;left:509.49px;top:1588.24px;font-size:37.79px;letter-spacing:0.189px;font-weight:400;color:#000;-webkit-text-stroke:1.70px #000;transform:scaleX(0.8689);transform-origin:left">TRANSACTION TYPE</div>
<div id="th2" class="t" style="position:absolute;left:1230.49px;top:1588.24px;font-size:37.79px;letter-spacing:0.189px;font-weight:400;color:#000;-webkit-text-stroke:1.70px #000;transform:scaleX(0.8732);transform-origin:left">NUMBER OF TRANSACTIONS</div>
<div id="th3" class="t" style="position:absolute;left:1954.99px;top:1588.24px;font-size:37.79px;letter-spacing:0.189px;font-weight:400;color:#000;-webkit-text-stroke:1.70px #000;transform:scaleX(0.9034);transform-origin:left">AMOUNT ($)</div>
<div id="td1" class="t" style="position:absolute;left:513.49px;top:1697.24px;font-size:37.79px;letter-spacing:0.189px;font-weight:400;color:#000;-webkit-text-stroke:1.70px #000;transform:scaleX(0.8402);transform-origin:left">SALE</div>
<div id="td2" class="t" style="position:absolute;left:1230.49px;top:1697.24px;font-size:37.79px;letter-spacing:-0.756px;font-weight:400;color:#000;-webkit-text-stroke:1.70px #000">1</div>
<div id="td3" class="t" style="position:absolute;left:1954.99px;top:1697.24px;font-size:37.79px;letter-spacing:0.189px;font-weight:400;color:#000;-webkit-text-stroke:1.70px #000;transform:scaleX(0.9420);transform-origin:left">$8.80</div>

<!-- card payments -->
<div class="r" style="left:443px;top:1820px;width:2954px;height:2px;background:#e9ecef"></div>
<div class="r" style="left:443px;top:1822.6px;width:2954px;height:137.4px;background:linear-gradient(90deg,#ff9a00 0%,#ffffff 76%)"></div>
<div id="cpH" class="t" style="position:absolute;left:508.31px;top:1864.39px;font-size:42.15px;letter-spacing:0.282px;font-weight:400;color:#fff;-webkit-text-stroke:1.90px #fff">Card Payments</div>
<div class="r" style="left:3104px;top:1833.7px;width:251px;height:112px;border-radius:10px;background:#b237ff"></div>
<svg class="ic" style="left:3143.15px;top:1862.65px" width="53.20" height="53.20" viewBox="0 0 24 24" preserveAspectRatio="none"><g fill="none" stroke="#fff" stroke-width="1.624" stroke-linecap="round" stroke-linejoin="round" ><path d="M3 10a7 7 0 1 0 14 0a7 7 0 1 0 -14 0"/><path d="M21 21l-6 -6"/></g></svg>
<div id="flt" class="t" style="position:absolute;left:3211.27px;top:1869.13px;font-size:43.31px;letter-spacing:0.217px;font-weight:400;color:#fff">Filter</div>
<div class="r" style="left:443px;top:1960px;width:2954px;height:2px;background:#e9ecef"></div>
<div class="r" style="left:441px;top:1962px;width:2958px;height:336px;background:#fff;border-left:2px solid #ececec;border-right:2px solid #ececec"></div>
<div class="r" style="left:443px;top:2298px;width:2954px;height:38px;background:linear-gradient(#ccc6c6,#ebe8e8)"></div>
<div class="r" style="left:443px;top:2298px;width:110px;height:38px;background:linear-gradient(90deg,rgba(245,245,245,0.95),rgba(245,245,245,0))"></div>
<div class="r" style="left:3287px;top:2298px;width:110px;height:38px;background:linear-gradient(90deg,rgba(240,240,240,0),rgba(240,240,240,0.8))"></div>
<div class="r" style="left:440px;top:1430px;width:3px;height:970px;background:#eeeeee"></div>
<div class="r" style="left:3397px;top:1430px;width:8px;height:970px;background:linear-gradient(90deg,#ececec,#ffffff)"></div>
<div class="r" style="left:472px;top:1992px;width:482.4px;height:106px;background:#eceef0;border-radius:0 60px 0 56px"></div>
<div id="saleP" class="t" style="position:absolute;left:651.38px;top:2015.77px;font-size:53.05px;letter-spacing:0.265px;font-weight:400;color:#4f5661;-webkit-text-stroke:2.39px #4f5661;transform:scaleX(0.9064);transform-origin:left">SALE</div>
<!-- visa -->
<svg class="ic" style="left:976.4px;top:2006.4px" width="106.6" height="79.4" viewBox="0 0 106.6 79.4">
<defs><clipPath id="vc"><rect width="106.6" height="79.4" rx="6"/></clipPath></defs>
<g clip-path="url(#vc)"><rect width="106.6" height="79.4" fill="#fff"/><rect width="106.6" height="14.8" fill="#129ec3"/><rect y="66.1" width="106.6" height="13.3" fill="#f7a21b"/>
<rect x="0" y="14.8" width="3.5" height="51.3" fill="#e0e0e0"/></g>
<text x="53" y="55.5" text-anchor="middle" font-family="Liberation Sans" font-weight="700" font-style="italic" font-size="39" fill="#0d9cc4" stroke="#0d9cc4" stroke-width="1.2" letter-spacing="-0.5">VISA</text>
<path d="M7 24 L22 25 L19 33 Z" fill="#f7a21b"/>
</svg>
<div id="c4242" class="t" style="position:absolute;left:1104.01px;top:2040.26px;font-size:37.21px;letter-spacing:1.860px;font-weight:400;color:#000;-webkit-text-stroke:1.67px #000;transform:scaleX(1.0851);transform-origin:left">**4242</div>
<div class="r" style="left:1437.0px;top:1992px;width:2.6px;height:106.5px;background:#222"></div><div class="r" style="left:1920.0px;top:1992px;width:2.6px;height:106.5px;background:#222"></div><div class="r" style="left:2161.5px;top:1992px;width:2.6px;height:106.5px;background:#222"></div><div class="r" style="left:2402.5px;top:1992px;width:2.6px;height:106.5px;background:#222"></div>
<div id="base" class="t" style="position:absolute;left:1447.78px;top:2011.76px;font-size:30.52px;letter-spacing:0.153px;font-weight:400;color:#000;transform:scaleX(0.9959);transform-origin:left">Base</div>
<div id="base8" class="t" style="position:absolute;left:1451.46px;top:2046.60px;font-size:38.52px;letter-spacing:1.926px;font-weight:400;color:#000;-webkit-text-stroke:1.73px #000;transform:scaleX(1.0124);transform-origin:left">$8.00</div>
<div id="discL" class="t" style="position:absolute;left:1929.78px;top:2011.76px;font-size:30.52px;letter-spacing:0.153px;font-weight:400;color:#000;transform:scaleX(0.9533);transform-origin:left">DISC</div>
<div id="disc35" class="t" style="position:absolute;left:1933.46px;top:2046.60px;font-size:38.52px;letter-spacing:1.926px;font-weight:400;color:#000;-webkit-text-stroke:1.73px #000;transform:scaleX(1.0026);transform-origin:left">$0.35</div>
<div id="tipL" class="t" style="position:absolute;left:2173.78px;top:2011.76px;font-size:30.52px;letter-spacing:0.590px;font-weight:400;color:#000">Tip</div>
<div id="tip80" class="t" style="position:absolute;left:2175.46px;top:2046.60px;font-size:38.52px;letter-spacing:1.926px;font-weight:400;color:#000;-webkit-text-stroke:1.73px #000;transform:scaleX(1.0124);transform-origin:left">$0.80</div>
<div id="taxL" class="t" style="position:absolute;left:2413.78px;top:2011.76px;font-size:30.52px;letter-spacing:0.890px;font-weight:400;color:#000">Tax</div>
<div id="tax0" class="t" style="position:absolute;left:2415.46px;top:2046.60px;font-size:38.52px;letter-spacing:1.926px;font-weight:400;color:#000;-webkit-text-stroke:1.73px #000;transform:scaleX(1.0513);transform-origin:left">$0.00</div>
<div id="big880" class="t" style="position:absolute;left:3104.95px;top:2016.31px;font-size:51.31px;letter-spacing:0.874px;font-weight:400;color:#4f5661;-webkit-text-stroke:2.31px #4f5661">$8.80</div>
<div class="r" style="left:451px;top:2120px;width:2938px;height:170px;background:#fde3fe"></div>
<div class="r" style="left:1892.5px;top:2099.6px;width:55px;height:55px;border-radius:50%;background:#4a4f50"></div>
<svg class="ic" style="left:1895.60px;top:2100.70px" width="48.80" height="53.60" viewBox="0 0 24 24" preserveAspectRatio="none"><g fill="none" stroke="#fff" stroke-width="2.156" stroke-linecap="round" stroke-linejoin="round" ><path d="M6 9l6 6l6 -6"/></g></svg>
<div id="invL" class="t" style="position:absolute;left:479.49px;top:2154.24px;font-size:37.79px;letter-spacing:0.644px;font-weight:400;color:#000;-webkit-text-stroke:1.70px #000">Invoice Number :</div>
<div id="invV" class="t" style="position:absolute;left:783.49px;top:2155.60px;font-size:37.79px;letter-spacing:0.884px;font-weight:400;color:#000">000001</div>
<div id="extL" class="t" style="position:absolute;left:480.49px;top:2209.24px;font-size:37.79px;letter-spacing:0.669px;font-weight:400;color:#000;-webkit-text-stroke:1.70px #000">External Id :</div>
<div id="extV" class="t" style="position:absolute;left:700.49px;top:2210.60px;font-size:37.79px;letter-spacing:0.189px;font-weight:400;color:#000;transform:scaleX(0.9839);transform-origin:left">251211185436qikvlVbk9r</div>
<div id="apL" class="t" style="position:absolute;left:1447.99px;top:2154.24px;font-size:37.79px;letter-spacing:0.189px;font-weight:400;color:#000;-webkit-text-stroke:1.70px #000;transform:scaleX(0.9881);transform-origin:left">Approval Code :</div>
<div id="apV" class="t" style="position:absolute;left:1727.49px;top:2155.60px;font-size:37.79px;letter-spacing:0.189px;font-weight:400;color:#000;transform:scaleX(0.9193);transform-origin:left">TAS070</div>
<div id="dtL" class="t" style="position:absolute;left:1444.99px;top:2209.24px;font-size:37.79px;letter-spacing:0.189px;font-weight:400;color:#000;-webkit-text-stroke:1.70px #000;transform:scaleX(0.9822);transform-origin:left">Date(POS) :</div>
<div id="dtV" class="t" style="position:absolute;left:1654.99px;top:2210.60px;font-size:37.79px;letter-spacing:0.189px;font-weight:400;color:#000;transform:scaleX(0.9696);transform-origin:left">12-11-2025 - 18:55</div>
<div id="t1L" class="t" style="position:absolute;left:2172.99px;top:2154.24px;font-size:37.79px;letter-spacing:0.189px;font-weight:400;color:#000;-webkit-text-stroke:1.70px #000;transform:scaleX(0.8939);transform-origin:left">Tag 1 :</div>
<div id="t1V" class="t" style="position:absolute;left:2283.49px;top:2155.60px;font-size:37.79px;letter-spacing:0.189px;font-weight:400;color:#000;transform:scaleX(0.9015);transform-origin:left">NA</div>
<div id="t2L" class="t" style="position:absolute;left:2172.99px;top:2209.24px;font-size:37.79px;letter-spacing:0.189px;font-weight:400;color:#000;-webkit-text-stroke:1.70px #000;transform:scaleX(0.9604);transform-origin:left">Tag 2 :</div>
<div id="t2V" class="t" style="position:absolute;left:2290.49px;top:2210.60px;font-size:37.79px;letter-spacing:0.189px;font-weight:400;color:#000;transform:scaleX(0.8990);transform-origin:left">NA</div>
<div id="t3L" class="t" style="position:absolute;left:2655.99px;top:2154.24px;font-size:37.79px;letter-spacing:0.189px;font-weight:400;color:#000;-webkit-text-stroke:1.70px #000;transform:scaleX(0.9627);transform-origin:left">Tag 3 :</div>
<div id="t3V" class="t" style="position:absolute;left:2774.49px;top:2155.60px;font-size:37.79px;letter-spacing:0.189px;font-weight:400;color:#000;transform:scaleX(0.9015);transform-origin:left">NA</div>
<div id="nmL" class="t" style="position:absolute;left:2707.55px;top:2211.66px;font-size:36.18px;letter-spacing:1.226px;font-weight:700;color:#000;font-family:'Liberation Serif', serif">Name:</div>
<div id="nmV" class="t" style="position:absolute;left:2832.03px;top:2211.29px;font-size:36.63px;letter-spacing:0.417px;font-weight:400;color:#000">Laura Bennet</div>
<svg class="ic" style="left:2648.57px;top:2206.81px" width="44.27" height="39.77" viewBox="0 0 24 24" preserveAspectRatio="none"><g fill="none" stroke="#000" stroke-width="2.399" stroke-linecap="round" stroke-linejoin="round" ><path d="M3 8a3 3 0 0 1 3 -3h12a3 3 0 0 1 3 3v8a3 3 0 0 1 -3 3h-12a3 3 0 0 1 -3 -3z"/><path d="M3 10h18"/></g></svg>
<svg class="ic" style="left:3132.63px;top:2168.40px" width="51.73" height="53.60" viewBox="0 0 24 24" preserveAspectRatio="none"><g fill="none" stroke="#000" stroke-width="1.914" stroke-linecap="round" stroke-linejoin="round" ><path d="M10 12a2 2 0 1 0 4 0a2 2 0 0 0 -4 0"/><path d="M21 12c-2.4 4 -5.4 6 -9 6c-3.6 0 -6.6 -2 -9 -6c2.4 -4 5.4 -6 9 -6c3.6 0 6.6 2 9 6"/></g></svg>
</body></html>
